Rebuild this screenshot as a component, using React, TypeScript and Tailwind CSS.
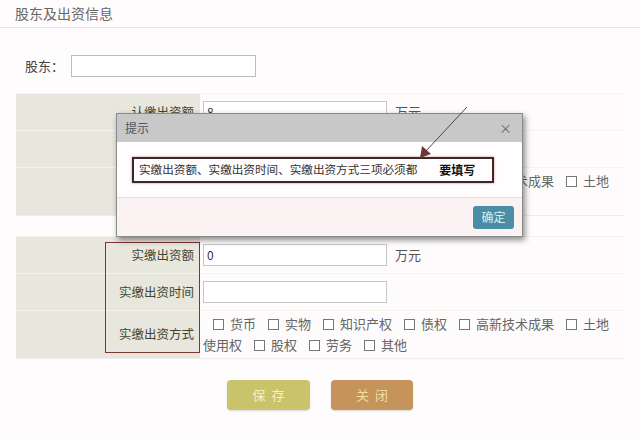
import React from "react";

function Box() {
  return <span className="inline-block w-[11px] h-[11px] border border-[#777] bg-white mr-[6px] shrink-0" />;
}

function Option({ label }: { label: string }) {
  return (
    <span className="flex items-center mr-[12px] whitespace-nowrap">
      <Box />
      {label}
    </span>
  );
}

function Section({ kind, amount }: { kind: string; amount: string }) {
  const cell = "flex items-center border-t border-[#f3f3ec]";
  return (
    <div className="relative mx-[16px] w-[608px] bg-[#fdfbfb] border-b border-[#efeded] grid grid-cols-[184px_1fr] text-[12.5px]">
      {/* row 1 */}
      <div className={`${cell} h-[37px] bg-[#e7e7de] justify-end pr-[6px] text-[#45452f]`}>{kind}出资额</div>
      <div className={`${cell} h-[37px] pl-[3px] border-[#f1eeee]`}>
        <div className="w-[184px] h-[22px] border border-[#c6c6c6] bg-white pl-[3px] text-[12px] text-[#333] leading-[20px]">{amount}</div>
        <span className="ml-[8px] text-[13px] text-[#555]">万元</span>
      </div>
      {/* row 2 */}
      <div className={`${cell} h-[37px] bg-[#e7e7de] justify-end pr-[6px] text-[#45452f]`}>{kind}出资时间</div>
      <div className={`${cell} h-[37px] pl-[3px] border-[#f1eeee]`}>
        <div className="w-[184px] h-[22px] border border-[#c6c6c6] bg-white" />
      </div>
      {/* row 3 */}
      <div className={`${cell} h-[48px] bg-[#e7e7de] justify-end pr-[6px] text-[#45452f]`}>{kind}出资方式</div>
      <div className={`${cell} h-[48px] pl-[3px] border-[#f1eeee] text-[13px] text-[#666]`}>
        <div className="flex flex-col">
          <div className="flex items-center h-[21px] pl-[10px]">
            <Option label="货币" />
            <Option label="实物" />
            <Option label="知识产权" />
            <Option label="债权" />
            <Option label="高新技术成果" />
            <Option label="土地" />
          </div>
          <div className="flex items-center h-[21px]">
            <span className="mr-[12px]">使用权</span>
            <Option label="股权" />
            <Option label="劳务" />
            <Option label="其他" />
          </div>
        </div>
      </div>
    </div>
  );
}

export default function App() {
  return (
    <div className="relative w-[640px] h-[441px] overflow-hidden bg-[#fefcfc] font-['Noto_Sans_CJK_SC','Noto_Sans',sans-serif]">
      {/* Header */}
      <div className="h-[28px] border-b border-[#e6e6e6] pl-[15px] flex items-center text-[14px] text-[#666]">
        股东及出资信息
      </div>

      {/* 股东 */}
      <div className="mt-[27px] h-[22px] flex items-center">
        <span className="w-[71px] pl-[25px] text-[13px] text-[#444]">股东：</span>
        <div className="w-[185px] h-[22px] border border-[#bdbdbd] bg-white" />
      </div>

      <div className="mt-[16px]">
        <Section kind="认缴" amount="8" />
      </div>

      <div className="mt-[20px] relative">
        <Section kind="实缴" amount="0" />
        {/* annotation box */}
        <div className="absolute left-[105px] top-[6px] w-[95px] h-[111px] border-[1.5px] border-[#7d3535]" />
      </div>

      {/* Buttons */}
      <div className="mt-[21px] flex justify-center gap-[21px]">
        <button className="w-[83px] h-[30px] rounded-[4px] bg-[#c9c46c] text-[#f4efc4] text-[13px] tracking-[6px] pl-[6px] shadow-[0_1px_2px_rgba(0,0,0,0.15)]">
          保存
        </button>
        <button className="w-[82px] h-[30px] rounded-[4px] bg-[#c5945b] text-[#f2dfa0] text-[13px] tracking-[6px] pl-[6px] shadow-[0_1px_2px_rgba(0,0,0,0.15)]">
          关闭
        </button>
      </div>

      {/* Dialog */}
      <div className="absolute left-[116px] top-[113px] w-[407px] h-[124px] border border-[#8a8a8a] bg-white shadow-[2px_3px_6px_rgba(0,0,0,0.45)] flex flex-col">
        <div className="h-[28px] bg-[#c8c8c8] flex items-center justify-between px-[8px] text-[12px] text-[#555]">
          <span>提示</span>
          <span className="text-[13px] text-[#666] pr-[2px]">×</span>
        </div>
        <div className="h-[56px] bg-[#fffdfd] border-b border-[#e4e0e0] flex items-center pl-[15px]">
          <div className="w-[362px] h-[26px] border-2 border-[#3a2b2b] shadow-[0_0_2px_rgba(160,40,40,0.6)] flex items-center pl-[5px] text-[11.6px] text-[#333] whitespace-nowrap">
            <span>实缴出资额、实缴出资时间、实缴出资方式三项必须都</span>
            <span className="ml-[22px] font-bold text-[#111] text-[12px]">要填写</span>
          </div>
        </div>
        <div className="flex-1 bg-[#fbf3f3] flex items-center justify-end pr-[8px]">
          <button className="w-[41px] h-[23px] rounded-[3px] bg-[#4a8ea6] text-[#d3f1f2] text-[12px]">确定</button>
        </div>
      </div>

      {/* Arrow annotation */}
      <svg className="absolute left-0 top-0 pointer-events-none" width="640" height="441">
        <line x1="467" y1="107" x2="425" y2="152" stroke="#4a4a4a" strokeWidth="1" />
        <polygon points="420,158 422,146 431,154" fill="#6a3a3a" />
      </svg>
    </div>
  );
}
